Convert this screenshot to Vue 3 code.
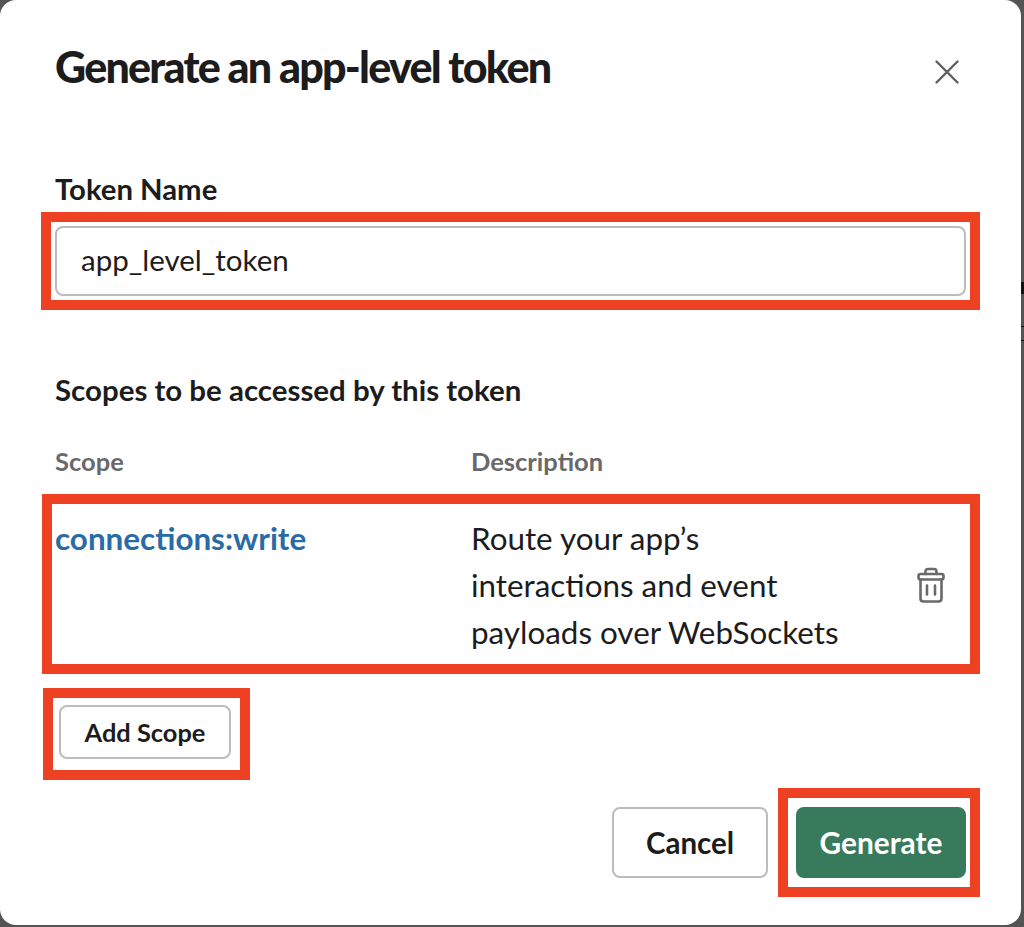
<script setup>
const title = 'Generate an app-level token'
</script>

<template>
  <div class="stage">
    <section class="dialog">
      <header class="head">
        <h1>{{ title }}</h1>
        <button class="close" aria-label="Close">
          <svg width="26" height="26" viewBox="0 0 26 26"><path d="M2.500 2.500 23.500 23.500M23.500 2.500 2.500 23.500" fill="none" stroke="#5f5f5f" stroke-width="2.400" stroke-linecap="round"/></svg>
        </button>
      </header>

      <label class="label">Token Name</label>
      <div class="input"><span class="mark m-input"></span>app_level_token</div>

      <h2 class="sub">Scopes to be accessed by this token</h2>
      <div class="cols">
        <span>Scope</span>
        <span>Description</span>
      </div>
      <div class="row">
        <span class="mark m-row"></span>
        <a class="scope">connections:write</a>
        <p class="desc">Route your app’s<br>interactions and event<br>payloads over WebSockets</p>
        <svg class="trash" width="28" height="36" viewBox="0 0 28 36" fill="none" stroke="#696969" stroke-width="2.600" stroke-linejoin="round" stroke-linecap="round">
          <path d="M8.500 7V4.500Q8.500 2 11 2H17Q19.500 2 19.500 4.500V7"/>
          <rect x="1.500" y="7" width="25" height="5.500" rx="2"/>
          <path d="M3.500 12.500V31.500Q3.500 34.500 6.500 34.500H21.500Q24.500 34.500 24.500 31.500V12.500"/>
          <path d="M10 18.500V27.500M18 18.500V27.500"/>
        </svg>
      </div>
      <div class="add-wrap">
        <button class="btn add"><span class="mark m-add"></span>Add Scope</button>
      </div>

      <footer class="foot">
        <button class="btn cancel">Cancel</button>
        <button class="btn generate"><span class="mark m-gen"></span>Generate</button>
      </footer>
    </section>
    <i class="bg-a"></i>
    <i class="bg-b"></i>
    <i class="bg-c"></i>
  </div>
</template>

<style>
html, body { margin: 0; background: #545454; }
</style>

<style scoped>
.stage {
  position: relative;
  width: 1024px;
  height: 927px;
  overflow: hidden;
  background: #545454;
  font-family: Lato, "Open Sans", sans-serif;
  color: #1d1c1d;
}
.dialog {
  box-sizing: border-box;
  width: 1021px;
  height: 925px;
  padding: 0 55px;
  background: #fff;
  border-radius: 16px;
  display: flex;
  flex-direction: column;
}
.head {
  height: 132px;
  display: flex;
  justify-content: space-between;
  align-items: flex-start;
}
h1 {
  margin: 41px 0 0;
  font-size: 43px;
  line-height: 52px;
  font-weight: 900;
  letter-spacing: -1.750px;
}
.close {
  margin: 59px 6px 0 0;
  padding: 0;
  border: 0;
  background: none;
  line-height: 0;
}
.label {
  display: block;
  height: 94px;
  box-sizing: border-box;
  padding-top: 39px;
  font-size: 29.300px;
  line-height: 36px;
  font-weight: 700;
}
.input {
  position: relative;
  box-sizing: border-box;
  height: 70px;
  width: 911px;
  padding-left: 24px;
  border: 2px solid #bcbcbc;
  border-radius: 8px;
  font-size: 29.500px;
  line-height: 64px;
}
.m-input { left: -16px; right: -16px; top: -16px; bottom: -16px; }
.sub {
  margin: 76px 0 0;
  font-size: 29.450px;
  line-height: 36px;
  font-weight: 700;
}
.cols {
  margin-top: 37px;
  display: grid;
  grid-template-columns: 416px 1fr;
  font-size: 25.500px;
  line-height: 32px;
  font-weight: 700;
  color: #696969;
}
.row {
  position: relative;
  box-sizing: border-box;
  margin-top: 27px;
  height: 160px;
  padding-top: 11px;
  width: 911px;
  display: grid;
  grid-template-columns: 416px 1fr 28px;
  align-items: start;
}
.mark {
  position: absolute;
  border: 10px solid #ee4123;
  pointer-events: none;
}
.m-row { left: -13px; right: -14px; top: -10px; bottom: -10px; }
.scope {
  font-size: 31.400px;
  line-height: 47px;
  font-weight: 700;
  color: #2a6aa5;
}
.desc {
  margin: 0;
  font-size: 31.400px;
  line-height: 47px;
}
.trash {
  margin-top: 52px;
  margin-left: -21px;
}
.add-wrap {
  margin-top: 41px;
  padding-left: 4px;
}
.btn {
  position: relative;
  box-sizing: border-box;
  padding: 0;
  border: 2px solid #bcbcbc;
  border-radius: 8px;
  background: #fff;
  color: #1d1c1d;
  font-family: inherit;
  font-weight: 700;
}
.add {
  width: 172px;
  height: 54px;
  font-size: 25.400px;
}
.m-add { left: -18px; right: -21px; top: -19px; bottom: -23px; }
.foot {
  margin-top: 48px;
  display: flex;
  justify-content: flex-end;
  gap: 28px;
}
.cancel, .generate {
  height: 71px;
  font-size: 29.500px;
}
.cancel { width: 156px; }
.generate {
  width: 170px;
  border: 0;
  background: #387b5c;
  color: #fff;
  font-size: 29.800px;
}
.m-gen { left: -18px; right: -14px; top: -19px; bottom: -19px; }
.bg-a, .bg-b, .bg-c {
  position: absolute;
  left: 1021px;
  width: 3px;
  background: #111;
}
.bg-a { top: 282px; height: 12px; }
.bg-b { top: 326px; height: 1px; }
.bg-c { top: 340px; height: 1px; }
</style>
